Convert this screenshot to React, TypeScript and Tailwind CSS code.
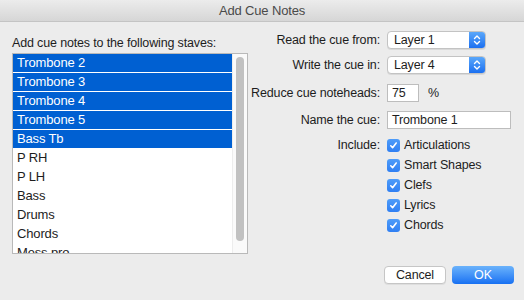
// Add Cue Notes dialog
const STAVES = [
  { name: 'Trombone 2', selected: true },
  { name: 'Trombone 3', selected: true },
  { name: 'Trombone 4', selected: true },
  { name: 'Trombone 5', selected: true },
  { name: 'Bass Tb', selected: true },
  { name: 'P RH', selected: false },
  { name: 'P LH', selected: false },
  { name: 'Bass', selected: false },
  { name: 'Drums', selected: false },
  { name: 'Chords', selected: false },
  { name: 'Mess pro', selected: false },
];

const INCLUDE = ['Articulations', 'Smart Shapes', 'Clefs', 'Lyrics', 'Chords'];

function PopUp({ value }: { value: string }) {
  return (
    <div className="flex h-[18px] w-[99px] overflow-hidden rounded-[4px] border border-[#c3c3c3] bg-white shadow-[0_1px_0_rgba(0,0,0,0.08)]">
      <span className="flex-1 pl-[6px] leading-[16px] text-[#1d1d1d]">{value}</span>
      <span className="flex w-[16px] items-center justify-center bg-gradient-to-b from-[#5aa7fa] to-[#1b6ff0]">
        <svg width="8" height="12" viewBox="0 0 8 12" fill="none" stroke="white" strokeWidth="1.4" strokeLinecap="round" strokeLinejoin="round">
          <path d="M1.5 4.5 L4 2 L6.5 4.5" />
          <path d="M1.5 7.5 L4 10 L6.5 7.5" />
        </svg>
      </span>
    </div>
  );
}

function CheckBox() {
  return (
    <span className="flex h-[13px] w-[13px] items-center justify-center rounded-[3px] bg-gradient-to-b from-[#4e9cf9] to-[#2f7ff3]">
      <svg width="9" height="9" viewBox="0 0 9 9" fill="none" stroke="white" strokeWidth="1.6" strokeLinecap="round" strokeLinejoin="round">
        <path d="M1.8 4.8 L3.6 6.7 L7.2 2" />
      </svg>
    </span>
  );
}

export default function App() {
  return (
    <div
      className="flex h-[300px] w-[524px] flex-col overflow-hidden bg-[#ececec] text-[12.5px] text-[#1d1d1d]"
      style={{ fontFamily: '"Liberation Sans", Arial, sans-serif', letterSpacing: '-0.15px' }}
    >
      {/* Title bar */}
      <div className="flex h-[22px] shrink-0 items-center justify-center border-b border-[#c4c4c4] bg-gradient-to-b from-[#ececec] to-[#d6d6d6] text-[13px] text-[#4a4a4a]">
        Add Cue Notes
      </div>

      <div className="flex">
        {/* Left: staves list */}
        <div className="flex w-[248px] flex-col pl-[12px] pt-[13px]">
          <div className="h-[17px] whitespace-nowrap leading-[16px]">Add cue notes to the following staves:</div>
          <div className="mt-px flex h-[201px] w-[236px] overflow-hidden border border-[#b9b9b9] bg-white">
            <div className="flex w-[219px] flex-col gap-px">
              {STAVES.map((s) => (
                <div
                  key={s.name}
                  className={
                    s.selected
                      ? 'h-[18px] shrink-0 bg-[#0060d2] pl-[4px] text-[13px] leading-[18px] text-white'
                      : 'h-[18px] shrink-0 pl-[4px] text-[13px] leading-[18px] text-[#1d1d1d]'
                  }
                >
                  {s.name}
                </div>
              ))}
            </div>
            <div className="w-[15px] border-l border-[#ededed] bg-[#fafafa] px-[3px] pt-[3px]">
              <div className="h-[184px] w-[8px] rounded-full bg-[#c1c1c1]" />
            </div>
          </div>
        </div>

        {/* Right: options */}
        <div className="flex flex-1 flex-col pt-[9px]">
          <div className="flex h-[18px] items-center gap-[7px]">
            <span className="w-[132px] whitespace-nowrap text-right">Read the cue from:</span>
            <PopUp value="Layer 1" />
          </div>
          <div className="mt-[7px] flex h-[18px] items-center gap-[7px]">
            <span className="w-[132px] whitespace-nowrap text-right">Write the cue in:</span>
            <PopUp value="Layer 4" />
          </div>
          <div className="mt-[10px] flex h-[18px] items-center gap-[7px]">
            <span className="w-[132px] whitespace-nowrap text-right">Reduce cue noteheads:</span>
            <div className="h-[18px] w-[32px] border border-[#bdbdbd] bg-white pl-[4px] leading-[16px]">75</div>
            <span className="ml-[2px]">%</span>
          </div>
          <div className="mt-[9px] flex h-[18px] items-center gap-[7px]">
            <span className="w-[132px] whitespace-nowrap text-right">Name the cue:</span>
            <div className="h-[18px] w-[124px] border border-[#bdbdbd] bg-white pl-[4px] leading-[16px]">Trombone 1</div>
          </div>
          <div className="mt-[6px] flex gap-[7px]">
            <span className="w-[132px] whitespace-nowrap pt-[2px] text-right leading-[16px]">Include:</span>
            <div className="flex flex-col">
              {INCLUDE.map((item) => (
                <div key={item} className="flex h-[20px] items-center gap-[4px]">
                  <CheckBox />
                  <span>{item}</span>
                </div>
              ))}
            </div>
          </div>
        </div>
      </div>

      {/* Buttons */}
      <div className="mt-[12px] flex justify-end gap-[6px] pr-[10px]">
        <button className="h-[18px] w-[62px] rounded-[4px] border border-[#c6c6c6] bg-white leading-[16px] shadow-[0_1px_0_rgba(0,0,0,0.06)]">
          Cancel
        </button>
        <button className="h-[18px] w-[62px] rounded-[4px] bg-gradient-to-b from-[#6ab2fb] to-[#1670f2] leading-[18px] text-white">
          OK
        </button>
      </div>
    </div>
  );
}
